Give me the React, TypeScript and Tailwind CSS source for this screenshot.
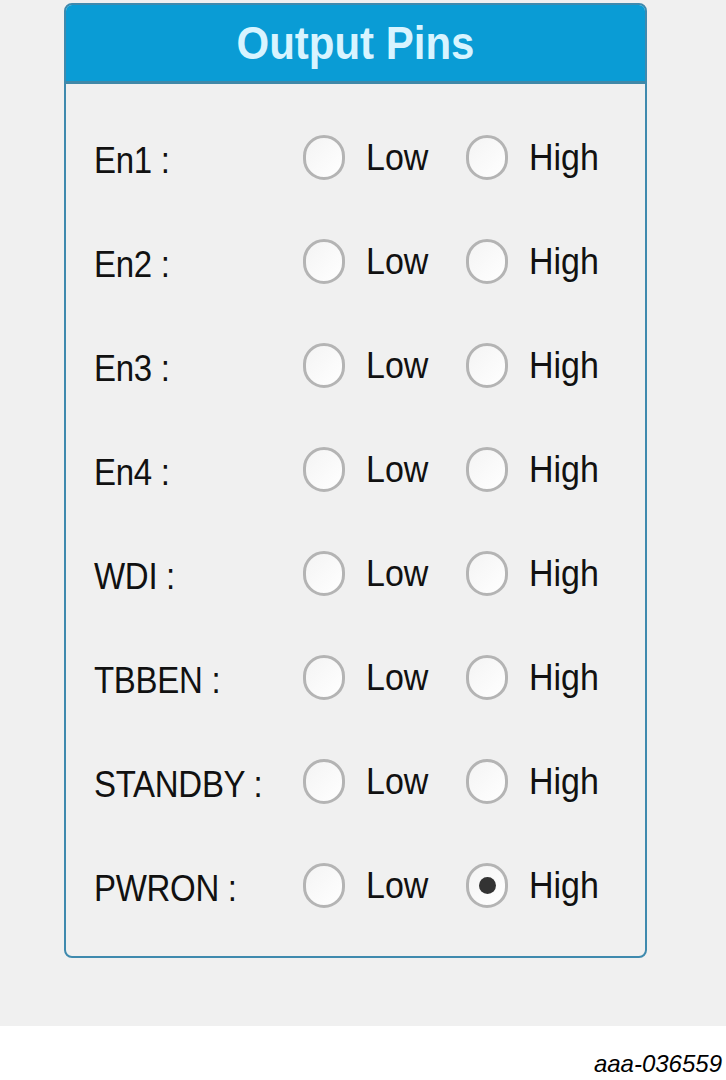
const pins = ["En1", "En2", "En3", "En4", "WDI", "TBBEN", "STANDBY", "PWRON"];

const selected: Record<string, "low" | "high"> = { PWRON: "high" };

function Radio({ checked }: { checked: boolean }) {
  return (
    <span className="flex h-[45px] w-[42px] shrink-0 items-center justify-center rounded-full border-[3px] border-[#b4b4b4] bg-gradient-to-br from-[#f4f4f4] to-white">
      {checked && <span className="h-[17px] w-[17px] rounded-full bg-[#333333]" />}
    </span>
  );
}

function PinRow({ name }: { name: string }) {
  const value = selected[name];
  return (
    <div className="flex h-[104px] items-center">
      <div className="w-[209px] translate-y-[4px] scale-y-[1.1] origin-left text-[33px] tracking-[-0.3px] text-[#111]">{name} :</div>
      <div className="flex w-[163px] items-center">
        <Radio checked={value === "low"} />
        <span className="ml-[21px] scale-y-[1.1] text-[34px] text-[#111]">Low</span>
      </div>
      <div className="flex items-center">
        <Radio checked={value === "high"} />
        <span className="ml-[21px] scale-y-[1.1] text-[34px] text-[#111]">High</span>
      </div>
    </div>
  );
}

export default function App() {
  return (
    <div className="w-[726px] bg-white" style={{ fontFamily: '"Liberation Sans", Arial, sans-serif' }}>
      <div className="h-[1026px] bg-[#f0f0f0] pt-[3px]">
        <div className="ml-[64px] h-[955px] w-[583px] overflow-hidden rounded-[8px] border-2 border-[#3f8aae] bg-[#f0f0f0]">
          <div className="flex h-[79px] items-center justify-center border-b-[3px] border-[#3f88a8] bg-[#0a9cd5]">
            <span className="scale-y-[1.1] text-[42px] font-bold text-[#d8f4ff]">Output Pins</span>
          </div>
          <div className="pl-[28px] pt-[21px]">
            {pins.map((p) => (
              <PinRow key={p} name={p} />
            ))}
          </div>
        </div>
      </div>
      <div className="flex h-[54px] items-end justify-end pb-[4px] pr-[4px]">
        <span className="text-[24px] italic leading-none text-black">aaa-036559</span>
      </div>
    </div>
  );
}
